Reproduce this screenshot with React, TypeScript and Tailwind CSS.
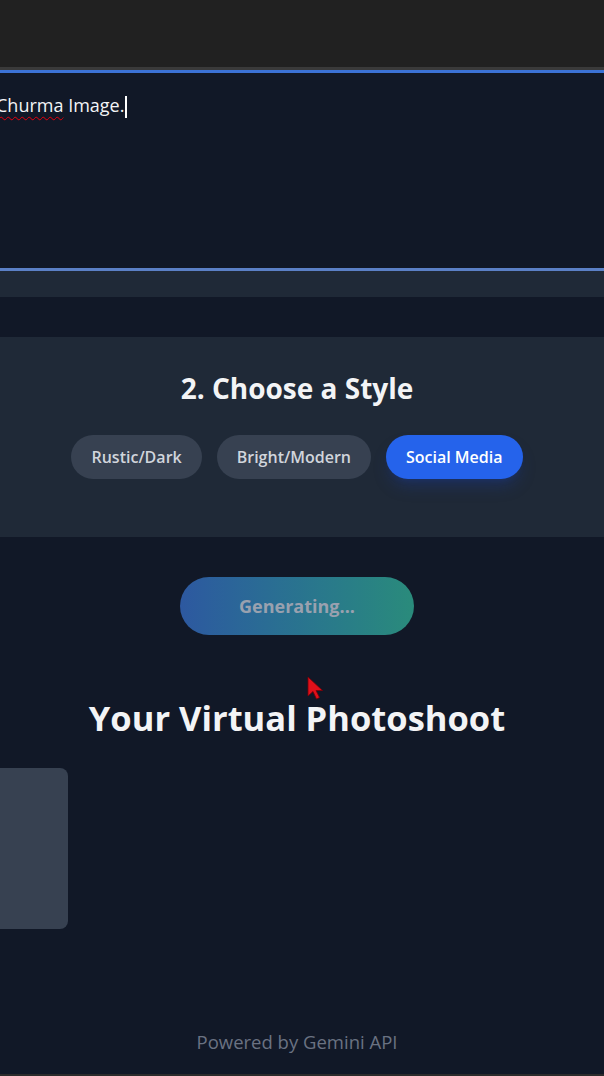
import React from 'react';

const styles = ['Rustic/Dark', 'Bright/Modern', 'Social Media'];

export default function App() {
  const active = 'Social Media';

  return (
    <div className="relative w-[604px] h-[1076px] overflow-hidden bg-[#111827] flex flex-col" style={{ fontFamily: '"Open Sans", "Noto Sans", sans-serif' }}>
      {/* browser chrome strip */}
      <div className="h-[67px] bg-[#212121] shrink-0" />
      <div className="h-[3px] bg-[#3a3a3a] shrink-0" />

      {/* prompt textarea, scrolled */}
      <div className="h-[201px] shrink-0 border-y-[3px] border-t-[#3b72d6] border-b-[#5b80c6] bg-[#111827] pt-[20px]">
        <p className="-ml-[4px] text-[18px] leading-[24px] text-gray-100">
          <span className="underline decoration-wavy decoration-red-600 decoration-1 underline-offset-4">Churma</span> Image.
          <span className="inline-block w-[2px] h-[22px] bg-white align-middle ml-[1px]" />
        </p>
      </div>
      <div className="h-[26px] bg-[#1f2937] shrink-0" />
      <div className="h-[40px] shrink-0" />

      {/* style picker */}
      <section className="h-[200px] shrink-0 bg-[#1f2937] pr-[10px] flex flex-col items-center pt-[33px]">
        <h2 className="text-[28px] leading-[36px] font-bold text-gray-100">2. Choose a Style</h2>
        <div className="mt-[29px] flex gap-[15px]">
          {styles.map((s) => (
            <button
              key={s}
              className={`h-[44px] px-[20px] rounded-full text-[16px] font-semibold ${
                s === active ? 'bg-[#2563eb] text-white shadow-lg shadow-blue-900/40' : 'bg-[#374151] text-gray-300'
              }`}
            >
              {s}
            </button>
          ))}
        </div>
      </section>

      <div className="flex flex-col flex-1 pr-[10px]">
        {/* generate */}
        <div className="flex justify-center mt-[40px]">
          <button className="w-[234px] h-[58px] rounded-full bg-gradient-to-r from-[#2d58a0] to-[#2a8b7b] text-[18px] font-bold text-gray-400">
            Generating...
          </button>
        </div>

        <h1 className="mt-[62px] text-center text-[34.5px] leading-[42px] font-bold text-gray-100">Your Virtual Photoshoot</h1>

        <div className="mt-[29px] w-[68px] h-[161px] bg-[#374151] rounded-r-lg" />

        <footer className="mt-auto mb-[18px] text-center text-[18.5px] text-gray-500">Powered by Gemini API</footer>
      </div>
      <div className="h-[2px] bg-[#2b2b2b] shrink-0" />

      {/* mouse pointer */}
      <svg className="absolute left-[307px] top-[676px]" width="18" height="26" viewBox="0 0 18 26">
        <path d="M1 1 L1 20 L6 15.5 L9.5 23 L12.5 21.5 L9 14.5 L15.5 14.5 Z" fill="#e0101a" stroke="#7a0008" strokeWidth="0.8" />
      </svg>
    </div>
  );
}
